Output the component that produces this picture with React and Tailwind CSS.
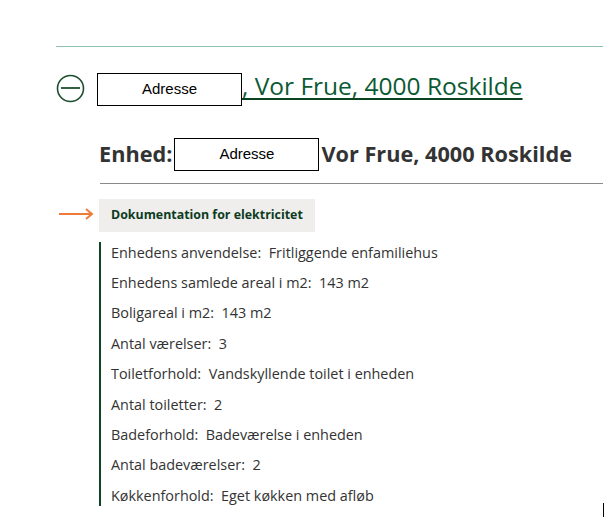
import React from "react";

const details = [
  ["Enhedens anvendelse", "Fritliggende enfamiliehus"],
  ["Enhedens samlede areal i m2", "143 m2"],
  ["Boligareal i m2", "143 m2"],
  ["Antal værelser", "3"],
  ["Toiletforhold", "Vandskyllende toilet i enheden"],
  ["Antal toiletter", "2"],
  ["Badeforhold", "Badeværelse i enheden"],
  ["Antal badeværelser", "2"],
  ["Køkkenforhold", "Eget køkken med afløb"],
];

function AddressBox() {
  return (
    <div className="w-[145px] h-[33px] shrink-0 border border-black bg-white flex items-center justify-center text-[15px] text-black font-['Liberation_Sans',Arial,sans-serif]">
      Adresse
    </div>
  );
}

function App() {
  return (
    <div className="relative min-h-[523px] bg-white pl-[56px] pr-[11px] pt-[46px] font-['Open_Sans',sans-serif] text-[#333]">
      <div className="border-t border-[#8fc1ad]" />

      {/* address header */}
      <div className="flex items-center mt-[26px]">
        <svg width="29" height="29" viewBox="0 0 29 29" className="shrink-0 -mt-[3px]">
          <circle cx="14.5" cy="14.5" r="13" fill="none" stroke="#1d4d2c" strokeWidth="1.6" />
          <line x1="5" y1="14" x2="24" y2="14" stroke="#1d4d2c" strokeWidth="1.8" />
        </svg>
        <div className="ml-[12px]">
          <AddressBox />
        </div>
        <a className="text-[24.5px] leading-none text-[#0b5a33] underline decoration-[#0a4320] decoration-2 underline-offset-[3px] -mt-[7px]">
          , Vor Frue, 4000 Roskilde
        </a>
      </div>

      <div className="relative pl-[44px]">
        <div className="flex items-center mt-[32px]">
          <span className="text-[21.7px] font-bold text-[#333] mr-[2px] -ml-[1px]">Enhed:</span>
          <AddressBox />
          <span className="text-[21.7px] font-bold text-[#333] ml-[2px]">Vor Frue, 4000 Roskilde</span>
        </div>
        <div className="border-t border-[#8a8a8a] mt-[12px]" />

        <div className="relative mt-[15px]">
          <svg width="36" height="12" viewBox="0 0 36 12" className="absolute left-[-41px] top-[9px]">
            <line x1="0" y1="6" x2="33" y2="6" stroke="#ee7a3c" strokeWidth="2" />
            <polyline points="27,1 33,6 27,11" fill="none" stroke="#ee7a3c" strokeWidth="2" />
          </svg>
          <div className="inline-block bg-[#efeeec] px-[12px] py-[7px] text-[12.4px] font-bold text-[#0d3b22] -ml-[1px]">
            Dokumentation for elektricitet
          </div>
        </div>

        <div className="mt-[10px] -ml-[1px] border-l-2 border-[#0f4424] pl-[10px] pt-[1px] flex flex-col gap-[10.4px]">
          {details.map(([label, value]) => (
            <div key={label} className="leading-[20px] text-[14.4px] text-[#333] whitespace-pre">
              {label}:  {value}
            </div>
          ))}
        </div>
      </div>

      <div className="absolute left-[603px] top-[503px] w-px h-[14px] bg-black" />
    </div>
  );
}

export default App;
